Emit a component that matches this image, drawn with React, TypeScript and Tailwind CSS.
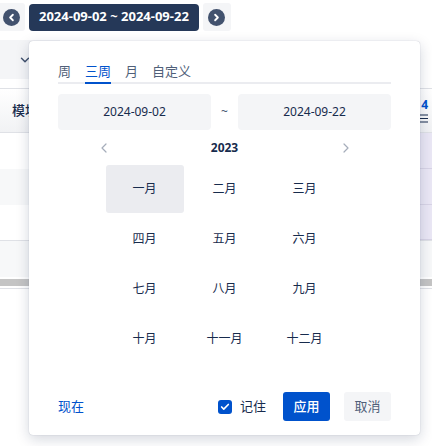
import { Check, ChevronDown, ChevronLeft, ChevronRight } from 'lucide-react';

const months = ['一月', '二月', '三月', '四月', '五月', '六月', '七月', '八月', '九月', '十月', '十一月', '十二月'];
const tabs = ['周', '三周', '月', '自定义'];

function RoundArrow({ dir }: { dir: 'left' | 'right' }) {
  return (
    <div className="flex h-[28px] w-[28px] items-center justify-center rounded-[3px] bg-[#f4f5f7]">
      <div className="flex h-[17px] w-[17px] items-center justify-center rounded-full bg-[#42526e] text-white">
        {dir === 'left' ? <ChevronLeft size={11} strokeWidth={4} /> : <ChevronRight size={11} strokeWidth={4} />}
      </div>
    </div>
  );
}

export default function App() {
  const rows = [
    { left: 'bg-white', border: false },
    { left: 'bg-[#f7f8f9]', border: false },
    { left: 'bg-white', border: true },
    { left: 'bg-[#f7f8f9]', border: false },
  ];

  return (
    <div className="relative h-[446px] w-[432px] overflow-hidden bg-white font-[family-name:'Noto_Sans','Noto_Sans_CJK_SC',sans-serif] text-[#172b4d]">
      {/* page behind the popup */}
      <div className="flex h-[34px] items-center gap-[4px] pl-0">
        <div className="-ml-[3px]">
          <RoundArrow dir="left" />
        </div>
        <div className="flex h-[27px] items-center rounded-[4px] bg-[#253858] px-[10px] text-[13px] font-bold text-white">
          2024-09-02 ~ 2024-09-22
        </div>
        <RoundArrow dir="right" />
      </div>

      <div className="mt-[6px] flex h-[39px] w-[60px] items-center justify-end bg-[#f4f5f7] pr-[28px] text-[#42526e]">
        <ChevronDown size={14} strokeWidth={2.5} />
      </div>

      <div className="mt-[9px] border-t border-[#dfe1e6]">
        <div className="flex h-[44px] border-b border-[#dfe1e6]">
          <div className="flex flex-1 items-center bg-gradient-to-b from-white to-[#f1f2f4] pl-[12px] text-[13px] font-medium">
            模块名称
          </div>
          <div className="flex w-[52px] flex-col items-end justify-center gap-[3px] bg-gradient-to-b from-white to-[#f1f2f4] pr-[4px]">
            <span className="text-[12px] font-bold leading-[12px] text-[#0052cc]">4</span>
            <svg width="10" height="9" viewBox="0 0 10 9" className="text-[#172b4d]">
              <path d="M0 1h10M0 4.5h10M0 8h10" stroke="currentColor" strokeWidth="1.2" />
            </svg>
          </div>
        </div>
        {rows.map((r, i) => (
          <div key={i} className={`flex h-[36px] ${r.border ? 'border-b border-[#dfe1e6]' : ''}`}>
            <div className={`flex-1 ${r.left}`}></div>
            <div
              className={`w-[52px] ${i < 3 ? 'border-b border-[#d8d4e6] bg-[#eae7f5]' : 'bg-[#f7f8f9]'}`}
            ></div>
          </div>
        ))}
        <div className="mt-[2px] h-[7px] bg-[#c4c4c4]"></div>
        <div className="mt-[2px] border-t border-[#dfe1e6]"></div>
      </div>

      {/* popup */}
      <div className="absolute left-[29px] top-[41px] w-[391px] rounded-[4px] bg-white px-[29px] pb-[14px] pt-[20px] shadow-[0_4px_14px_rgba(9,30,66,0.18),0_0_1px_rgba(9,30,66,0.31)]">
        <div className="flex gap-[14px] border-b-2 border-[#ebecf0] text-[13px]">
          {tabs.map((t) => (
            <div
              key={t}
              className={`-mb-[2px] border-b-2 pb-[1px] leading-[20px] ${
                t === '三周' ? 'border-[#0052cc] text-[#0052cc]' : 'border-transparent text-[#505f79]'
              }`}
            >
              {t}
            </div>
          ))}
        </div>

        <div className="mt-[10px] flex h-[36px] items-center text-[12px]">
          <div className="flex h-full flex-1 items-center justify-center rounded-[4px] bg-[#f4f5f7]">2024-09-02</div>
          <div className="w-[27px] text-center text-[#42526e]">~</div>
          <div className="flex h-full flex-1 items-center justify-center rounded-[4px] bg-[#f4f5f7]">2024-09-22</div>
        </div>

        <div className="mx-auto mt-[8px] flex h-[20px] w-[258px] items-center justify-between text-[#a5adba]">
          <ChevronLeft size={16} strokeWidth={1.8} />
          <span className="text-[12px] font-bold text-[#172b4d]">2023</span>
          <ChevronRight size={16} strokeWidth={1.8} />
        </div>

        <div className="mx-auto mt-[7px] grid w-[238px] grid-cols-3 gap-[2px]">
          {months.map((m, i) => (
            <div
              key={m}
              className={`flex h-[48px] items-center justify-center rounded-[3px] text-[12px] ${
                i === 0 ? 'bg-[#ebecf0]' : ''
              }`}
            >
              {m}
            </div>
          ))}
        </div>

        <div className="mt-[29px] flex h-[29px] items-center text-[13px]">
          <span className="text-[#0052cc]">现在</span>
          <div className="ml-auto flex items-center">
            <span className="flex h-[14px] w-[14px] items-center justify-center rounded-[3px] bg-[#0052cc] text-white">
              <Check size={10} strokeWidth={4} />
            </span>
            <span className="ml-[8px]">记住</span>
          </div>
          <button className="ml-[17px] h-[29px] w-[47px] rounded-[3px] bg-[#0052cc] font-medium text-white">应用</button>
          <button className="ml-[14px] h-[29px] w-[47px] rounded-[3px] bg-[#f4f5f7] text-[#505f79]">取消</button>
        </div>
      </div>
    </div>
  );
}
